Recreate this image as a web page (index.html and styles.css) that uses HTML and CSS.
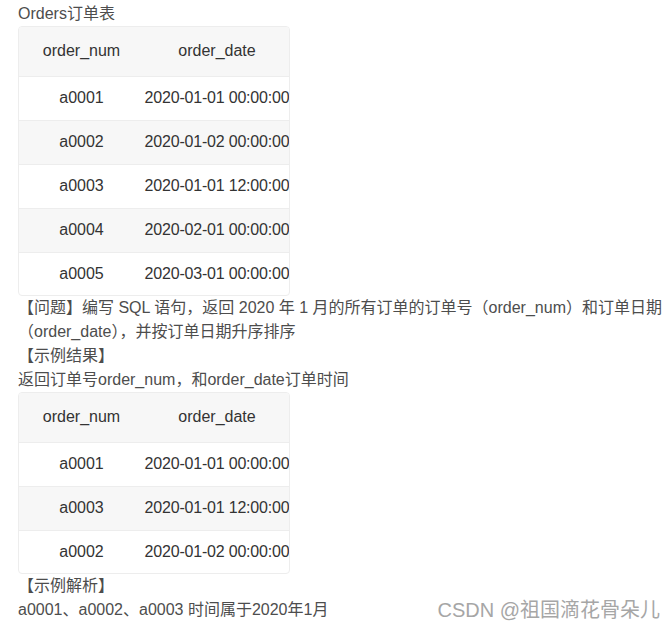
FILE: index.html
```html
<!DOCTYPE html>
<html lang="zh-CN">
<head>
    <meta charset="UTF-8">
    <title>Orders订单表</title>
    <link rel="stylesheet" href="styles.css">
</head>
<body>
    <div class="article">
        <p>Orders订单表</p>
        <div class="table-box">
            <table>
                <thead>
                    <tr><th>order_num</th><th>order_date</th></tr>
                </thead>
                <tbody>
                    <tr><td>a0001</td><td>2020-01-01 00:00:00</td></tr>
                    <tr><td>a0002</td><td>2020-01-02 00:00:00</td></tr>
                    <tr><td>a0003</td><td>2020-01-01 12:00:00</td></tr>
                    <tr><td>a0004</td><td>2020-02-01 00:00:00</td></tr>
                    <tr><td>a0005</td><td>2020-03-01 00:00:00</td></tr>
                </tbody>
            </table>
        </div>
        <p>【问题】编写 SQL 语句，返回 2020 年 1 月的所有订单的订单号（order_num）和订单日期（order_date），并按订单日期升序排序</p>
        <p>【示例结果】</p>
        <p>返回订单号order_num，和order_date订单时间</p>
        <div class="table-box">
            <table>
                <thead>
                    <tr><th>order_num</th><th>order_date</th></tr>
                </thead>
                <tbody>
                    <tr><td>a0001</td><td>2020-01-01 00:00:00</td></tr>
                    <tr><td>a0003</td><td>2020-01-01 12:00:00</td></tr>
                    <tr><td>a0002</td><td>2020-01-02 00:00:00</td></tr>
                </tbody>
            </table>
        </div>
        <p>【示例解析】</p>
        <p>a0001、a0002、a0003 时间属于2020年1月</p>
    </div>
    <div class="watermark">CSDN @祖国滴花骨朵儿</div>
</body>
</html>
```

FILE: styles.css
```css
* {
    margin: 0;
    padding: 0;
    box-sizing: border-box;
}
body {
    font-family: "Liberation Sans", "Noto Sans CJK SC", sans-serif;
    font-size: 16px;
    line-height: 24px;
    color: #4d4d4d;
    background-color: #fff;
    position: relative;
    height: 628px;
}
.article {
    padding: 2px 4px 0 18px;
}
/* tables are clipped on the right like the original scroll box */
.table-box {
    width: 272px;
    border: 1px solid #ededed;
    border-radius: 4px;
    overflow: hidden;
}
table {
    border-collapse: collapse;
    table-layout: fixed;
    width: 271px;
}
th, td {
    text-align: center;
    font-weight: normal;
    white-space: nowrap;
    overflow: hidden;
    color: #333;
    border-bottom: 1px solid #ededed;
}
th:first-child, td:first-child {
    width: 125px;
}
td:last-child {
    letter-spacing: -0.2px;
}
th {
    height: 49px;
    background-color: #f7f7f7;
}
td {
    height: 44px;
}
tbody tr:nth-child(even) td {
    background-color: #f7f7f7;
}
tbody tr:last-child td {
    height: 43px;
    border-bottom: none;
}
.watermark {
    position: absolute;
    right: 8px;
    top: 597px;
    font-size: 20px;
    line-height: 26px;
    color: #a6a6a6;
}
```
